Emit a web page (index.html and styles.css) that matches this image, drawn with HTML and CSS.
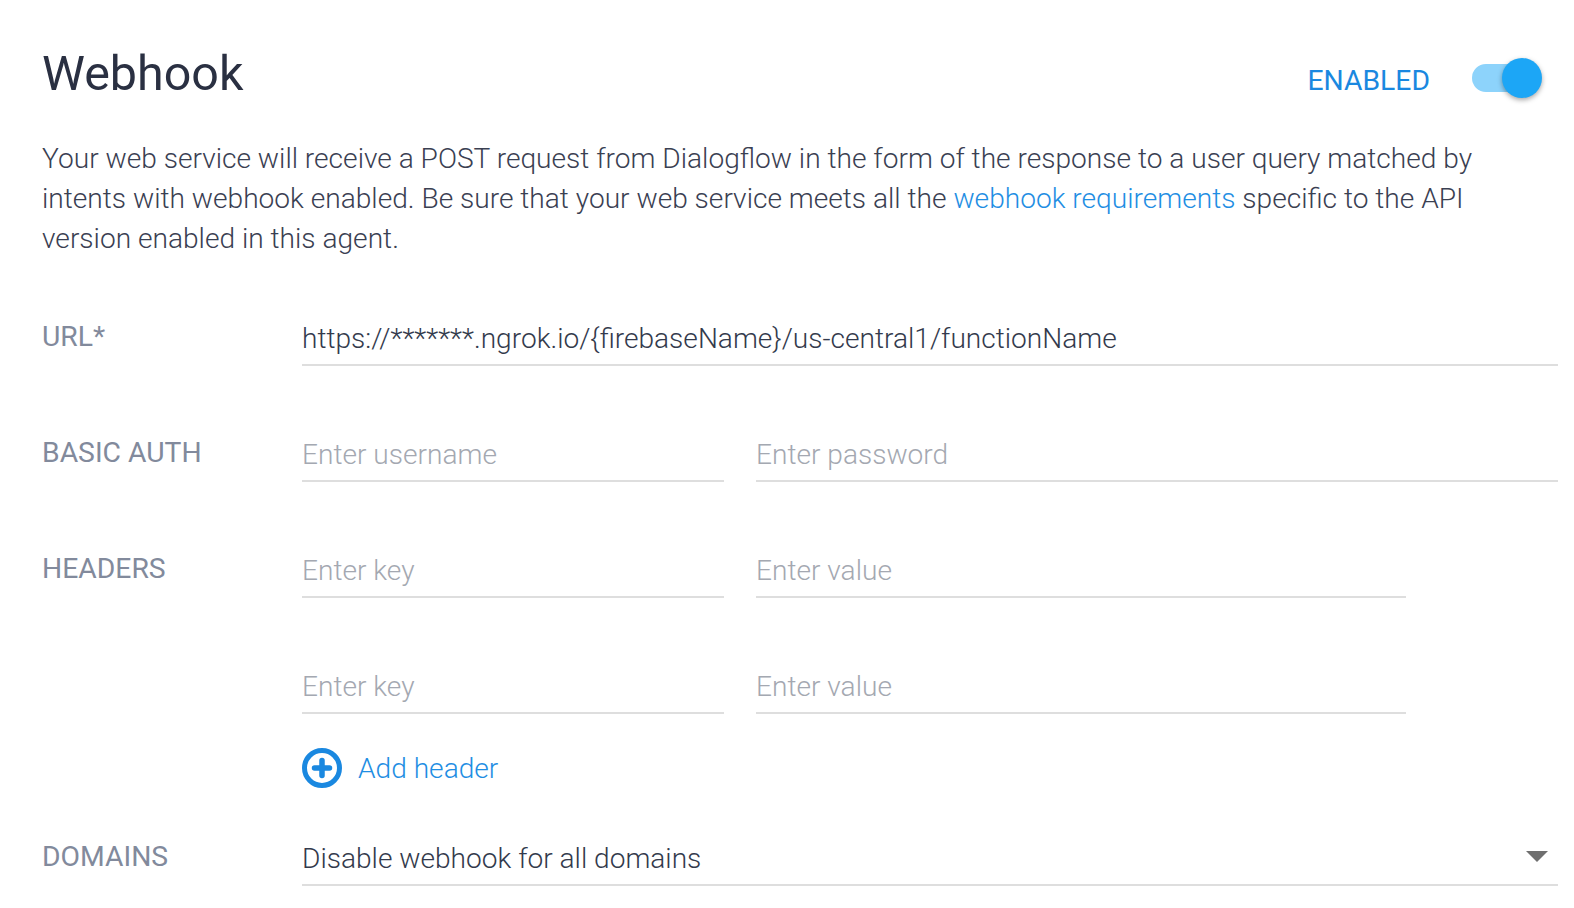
FILE: index.html
```html
<!DOCTYPE html>
<html lang="en">
<head>
<meta charset="utf-8">
<title>Webhook</title>
<link rel="stylesheet" href="styles.css">
</head>
<body>
<main class="page">
  <header class="head">
    <h1 class="title">Webhook</h1>
    <div class="status">
      <span class="status-label">ENABLED</span>
      <span class="switch"><span class="track"></span><span class="thumb"></span></span>
    </div>
  </header>
  <p class="desc">Your web service will receive a POST request from Dialogflow in the form of the response to a user query matched by intents with webhook enabled. Be sure that your web service meets all the <a class="link" href="#">webhook requirements</a> specific to the API version enabled in this agent.</p>
  <div class="row row-url">
    <div class="label">URL*</div>
    <div class="fields"><div class="field grow value">https://*******.ngrok.io/{firebaseName}/us-central1/functionName</div></div>
  </div>
  <div class="row">
    <div class="label">BASIC AUTH</div>
    <div class="fields">
      <div class="field key ph">Enter username</div>
      <div class="field grow ph">Enter password</div>
    </div>
  </div>
  <div class="row">
    <div class="label">HEADERS</div>
    <div class="fields short">
      <div class="field key ph">Enter key</div>
      <div class="field grow ph">Enter value</div>
    </div>
  </div>
  <div class="row">
    <div class="label"></div>
    <div class="fields short">
      <div class="field key ph">Enter key</div>
      <div class="field grow ph">Enter value</div>
    </div>
  </div>
  <div class="add">
    <svg class="add-icon" viewBox="0 0 40 40" width="40" height="40" aria-hidden="true">
      <circle cx="20" cy="20" r="17.5" fill="none" stroke="#1a88e0" stroke-width="5"/>
      <path d="M20 12.5v15M12.5 20h15" fill="none" stroke="#1a88e0" stroke-width="5.5" stroke-linecap="round"/>
    </svg>
    <a class="link add-text" href="#">Add header</a>
  </div>
  <div class="row row-domains">
    <div class="label">DOMAINS</div>
    <div class="fields"><div class="field grow value select">Disable webhook for all domains<span class="caret"></span></div></div>
  </div>
</main>
</body>
</html>
```
FILE: styles.css
```css
* { box-sizing: border-box; }
html, body { margin: 0; padding: 0; background: #fff; }
body {
  font-family: Roboto, "Liberation Sans", sans-serif;
  font-weight: 300;
  font-size: 28.12px;
  color: #2f3648;
  overflow: hidden;
}
.page { width: 1574px; height: 908px; padding: 0 16px 0 42px; }
.head { display: flex; justify-content: space-between; height: 139px; }
.title { margin: 44px 0 0; font-size: 48.4px; line-height: 60px; font-weight: 400; color: #2a3042; }
.status { display: flex; align-items: flex-start; padding-top: 58px; margin-right: 16px; }
.status-label { color: #1a88e0; font-weight: 400; font-size: 28.3px; line-height: 44px; margin-top: 1px; }
.switch { position: relative; width: 70px; height: 40px; margin-left: 42px; }
.track { position: absolute; left: 0; top: 6px; width: 60px; height: 28px; border-radius: 14px; background: #8dd3fb; }
.thumb { position: absolute; left: 30px; top: 0; width: 40px; height: 40px; border-radius: 50%; background: #1ca6f6; box-shadow: 0 2px 5px rgba(0,0,0,.35); }
.desc { margin: 0; line-height: 40px; width: 1490px; color: #3a4052; }
.link { color: #1f8ee3; text-decoration: none; }
.row { display: flex; margin-top: 55px; }
.row-url { margin-top: 46px; }
.row-domains { margin-top: 37px; }
.label { width: 260px; flex: none; color: #828a9c; font-weight: 400; font-size: 28.3px; line-height: 40px; padding-top: 12px; }
.fields { flex: 1; display: flex; gap: 32px; }
.fields.short { padding-right: 152px; }
.field { height: 61px; border-bottom: 2px solid #dedede; line-height: 40px; padding-top: 14px; white-space: nowrap; font-size: 28.1px; }
.key { width: 422px; flex: none; }
.grow { flex: 1; }
.ph { color: #a4a8b1; }
.value { color: #333a4c; }
.add { display: flex; align-items: center; gap: 16px; margin: 34px 0 0 260px; height: 40px; }
.add-text { line-height: 40px; margin-top: 2px; }
.select { position: relative; }
.caret { position: absolute; right: 10px; top: 26px; border-style: solid; border-width: 11px 11.5px 0; border-color: #6f6f6f transparent transparent; }
```
